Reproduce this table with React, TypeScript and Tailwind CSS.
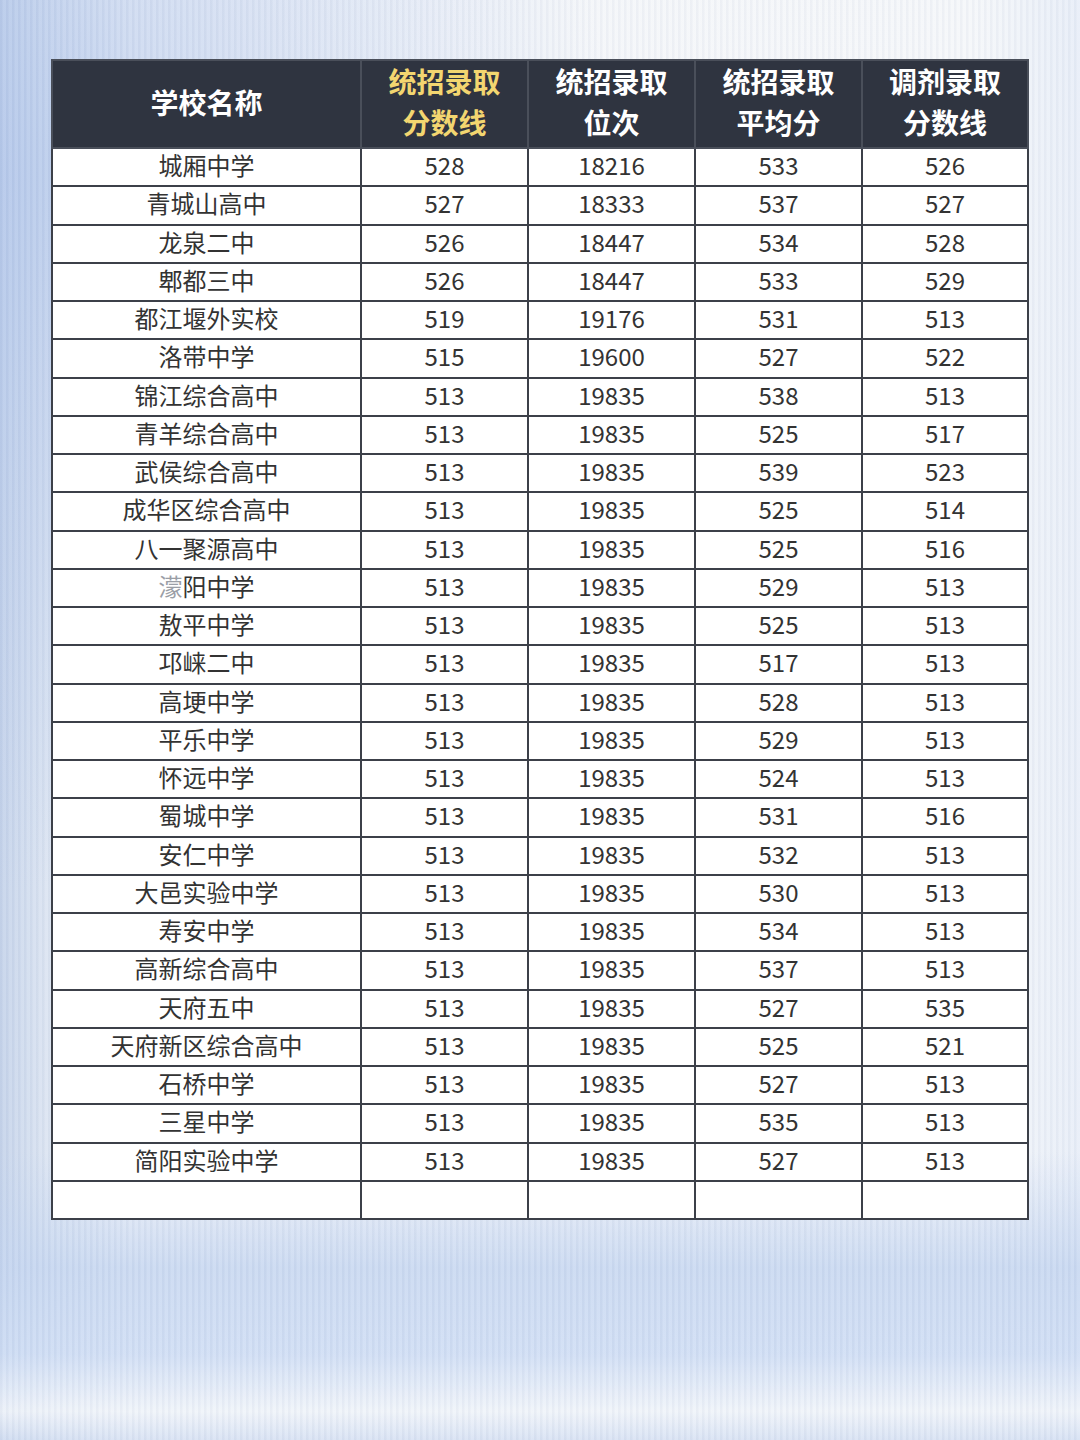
import React from "react";

type Row = [string, string, string, string, string];

const rows: Row[] = [
  ["城厢中学", "528", "18216", "533", "526"],
  ["青城山高中", "527", "18333", "537", "527"],
  ["龙泉二中", "526", "18447", "534", "528"],
  ["郫都三中", "526", "18447", "533", "529"],
  ["都江堰外实校", "519", "19176", "531", "513"],
  ["洛带中学", "515", "19600", "527", "522"],
  ["锦江综合高中", "513", "19835", "538", "513"],
  ["青羊综合高中", "513", "19835", "525", "517"],
  ["武侯综合高中", "513", "19835", "539", "523"],
  ["成华区综合高中", "513", "19835", "525", "514"],
  ["八一聚源高中", "513", "19835", "525", "516"],
  ["濛阳中学", "513", "19835", "529", "513"],
  ["敖平中学", "513", "19835", "525", "513"],
  ["邛崃二中", "513", "19835", "517", "513"],
  ["高埂中学", "513", "19835", "528", "513"],
  ["平乐中学", "513", "19835", "529", "513"],
  ["怀远中学", "513", "19835", "524", "513"],
  ["蜀城中学", "513", "19835", "531", "516"],
  ["安仁中学", "513", "19835", "532", "513"],
  ["大邑实验中学", "513", "19835", "530", "513"],
  ["寿安中学", "513", "19835", "534", "513"],
  ["高新综合高中", "513", "19835", "537", "513"],
  ["天府五中", "513", "19835", "527", "535"],
  ["天府新区综合高中", "513", "19835", "525", "521"],
  ["石桥中学", "513", "19835", "527", "513"],
  ["三星中学", "513", "19835", "535", "513"],
  ["简阳实验中学", "513", "19835", "527", "513"],
];

const font = "font-['Noto_Sans_CJK_SC','Noto_Sans',sans-serif]";

function SchoolName({ name }: { name: string }) {
  if (name.startsWith("濛")) {
    return (
      <>
        <span className="text-[#9a9ea6]">濛</span>
        {name.slice(1)}
      </>
    );
  }
  return <>{name}</>;
}

const th = "border-2 border-[#4a4f5a] p-0 pb-[4px]";
const td = "border-2 border-[#3c4049] text-center p-0 pb-[4px]";

export default function App() {
  return (
    <div className={`relative w-[1080px] h-[1440px] overflow-hidden bg-[#f1f3f8] ${font}`}>
      {/* paper tint */}
      <div className="absolute inset-0 bg-[linear-gradient(90deg,#c6d4eb_0%,#dfe7f3_5%,#f3f5f9_12%,#f5f7fa_90%,#e8eef8_100%)]" />
      <div className="absolute inset-0 bg-[linear-gradient(180deg,rgba(255,255,255,0)_0%,rgba(255,255,255,0)_80%,rgba(196,213,240,0.85)_88%,rgba(205,220,244,0.9)_94%,rgba(240,244,250,0.9)_98%,rgba(210,222,242,0.8)_100%)]" />
      <div className="absolute inset-0 bg-[radial-gradient(ellipse_at_0%_12%,rgba(175,196,234,0.75),rgba(175,196,234,0)_40%)]" />
      <div className="absolute inset-0 bg-[repeating-linear-gradient(90deg,rgba(120,135,165,0.06)_0px,rgba(120,135,165,0.06)_2px,rgba(255,255,255,0.08)_3px,rgba(255,255,255,0.08)_6px)]" />

      <div className="relative pt-[59px] pl-[51px]">
        <table className="table-fixed border-collapse bg-white text-[#333] border-2 border-[#3c4049]">
          <colgroup>
            <col className="w-[309px]" />
            <col className="w-[167px]" />
            <col className="w-[167px]" />
            <col className="w-[167px]" />
            <col className="w-[166px]" />
          </colgroup>
          <thead>
            <tr className="h-[88px] bg-[#2f3440] text-[28px] font-bold leading-[41px]">
              <th className={`${th} text-white`}>学校名称</th>
              <th className={`${th} text-[#f3d670]`}>
                统招录取
                <br />
                分数线
              </th>
              <th className={`${th} text-white`}>
                统招录取
                <br />
                位次
              </th>
              <th className={`${th} text-white`}>
                统招录取
                <br />
                平均分
              </th>
              <th className={`${th} text-white`}>
                调剂录取
                <br />
                分数线
              </th>
            </tr>
          </thead>
          <tbody className="text-[24px] leading-none">
            {rows.map((r) => (
              <tr key={r[0]} className="h-[38.25px]">
                <td className={td}>
                  <SchoolName name={r[0]} />
                </td>
                {r.slice(1).map((v, i) => (
                  <td key={i} className={td}>
                    {v}
                  </td>
                ))}
              </tr>
            ))}
            <tr className="h-[38.25px]">
              <td className={td} />
              <td className={td} />
              <td className={td} />
              <td className={td} />
              <td className={td} />
            </tr>
          </tbody>
        </table>
      </div>
    </div>
  );
}
